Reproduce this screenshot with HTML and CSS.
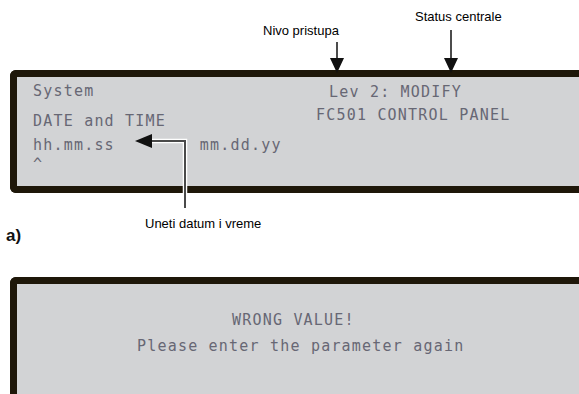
FILE: index.html
```html
<!DOCTYPE html>
<html lang="en">

<head>
  <meta charset="UTF-8" />
  <meta name="viewport" content="width=device-width, initial-scale=1" />
  <title>FC501 - datum i vreme</title>
  <link rel="stylesheet" href="styles.css">
</head>

<body>
  <div class="figure">
    <!-- callouts -->
    <span class="label label-status">Status centrale</span>
    <span class="label label-level">Nivo pristupa</span>
    <span class="label label-input">Uneti datum i vreme</span>
    <svg class="arrows" width="579" height="394" viewBox="0 0 579 394">
      <line x1="337" y1="42" x2="337" y2="60" stroke="#111" stroke-width="1.5" />
      <polygon points="330,58 344,58 337,73" fill="#111" />
      <line x1="451" y1="30" x2="451" y2="60" stroke="#111" stroke-width="1.5" />
      <polygon points="444,58 458,58 451,73" fill="#111" />
      <polyline points="185,208 185,141 150,141" fill="none" stroke="#fff" stroke-width="4.5" />
      <polyline points="185,208 185,141 150,141" fill="none" stroke="#4a4a4a" stroke-width="2" />
      <polygon points="152,134 152,148 135,141" fill="#111" />
    </svg>

    <div class="panel panel-top">
      <div class="lcd-col lcd-left">
        <div class="lcd-line line-system">System</div>
        <div class="lcd-line line-menu">DATE and TIME</div>
        <div class="lcd-line line-format">
          <span>hh.mm.ss</span>
          <span class="date-format">mm.dd.yy</span>
        </div>
        <div class="lcd-line line-cursor">^</div>
      </div>
      <div class="lcd-col lcd-right">
        <div class="lcd-line line-level">Lev 2: MODIFY</div>
        <div class="lcd-line line-name">FC501 CONTROL PANEL</div>
      </div>
    </div>

    <div class="caption">a)</div>

    <div class="panel panel-bottom">
      <div class="lcd-col">
        <div class="lcd-line line-error">WRONG VALUE!</div>
        <div class="lcd-line line-retry">Please enter the parameter again</div>
      </div>
    </div>
  </div>
</body>

</html>
```

FILE: styles.css
```css
body {
  margin: 0;
  background-color: white;
  overflow: hidden;
  font-family: "Liberation Sans", Arial, sans-serif;
}

.figure {
  position: relative;
  width: 579px;
  height: 394px;
  padding-top: 70px;
  box-sizing: border-box;
  overflow: hidden;
}

.arrows {
  position: absolute;
  left: 0;
  top: 0;
  z-index: 2;
}

.label {
  position: absolute;
  font-size: 13px;
  line-height: 16px;
  color: #000;
  white-space: nowrap;
  z-index: 3;
}

.label-status {
  left: 415px;
  top: 9px;
}

.label-level {
  left: 263px;
  top: 23px;
}

.label-input {
  left: 145px;
  top: 216px;
}

/* the display runs off the right edge of the figure */
.panel {
  display: flex;
  width: 569px;
  height: 123px;
  margin-left: 10px;
  box-sizing: border-box;
  border: 7px solid #1e1709;
  border-right: 0;
  border-radius: 6px 0 0 6px;
  background-color: #d2d3d5;
}

.lcd-col {
  display: flex;
  flex-direction: column;
}

.lcd-line {
  font-family: "DejaVu Sans Mono", monospace;
  font-size: 15px;
  line-height: 18px;
  letter-spacing: 1.2px;
  color: #676774;
  white-space: pre;
}

.lcd-left {
  width: 299px;
  box-sizing: border-box;
  padding: 5px 0 0 16px;
}

.line-menu {
  margin-top: 12px;
}

.line-format {
  display: flex;
  margin-top: 6px;
}

.date-format {
  margin-left: 85px;
}

.line-cursor {
  margin-top: 1px;
}

.lcd-right {
  padding-top: 6px;
}

.line-level {
  margin-left: 13px;
}

.line-name {
  margin-top: 5px;
}

.caption {
  height: 84px;
  padding: 33px 0 0 6px;
  box-sizing: border-box;
  font-size: 17px;
  font-weight: bold;
  line-height: 20px;
  color: #111;
}

.panel-bottom {
  height: 117px;
  border-bottom: 0;
  border-radius: 6px 0 0 0;
}

.panel-bottom .lcd-col {
  padding: 27px 0 0 120px;
}

.line-error {
  margin-left: 95px;
}

.line-retry {
  margin-top: 8px;
}
```
